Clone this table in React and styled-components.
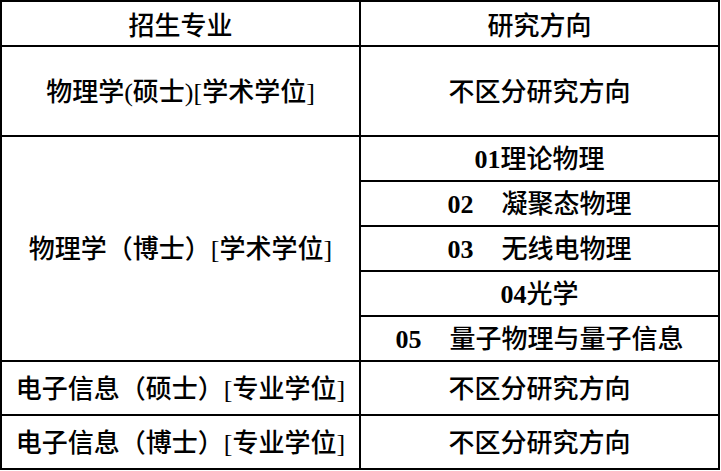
import * as React from "react";
import styled, { createGlobalStyle } from "styled-components";

const GlobalStyle = createGlobalStyle`
  html, body {
    margin: 0;
    padding: 0;
    background: #fff;
  }
  body {
    font-family: "Liberation Serif", "Noto Sans CJK SC", serif;
  }
`;

const programs = [
  { name: "物理学(硕士)[学术学位]", size: "tall", directions: [{ name: "不区分研究方向" }] },
  {
    name: "物理学（博士）[学术学位]",
    size: "normal",
    directions: [
      { code: "01", name: "理论物理" },
      { code: "02", name: "凝聚态物理", spaced: true },
      { code: "03", name: "无线电物理", spaced: true },
      { code: "04", name: "光学" },
      { code: "05", name: "量子物理与量子信息", spaced: true },
    ],
  },
  { name: "电子信息（硕士）[专业学位]", size: "wide", directions: [{ name: "不区分研究方向" }] },
  { name: "电子信息（博士）[专业学位]", size: "wide", directions: [{ name: "不区分研究方向" }] },
];

export default function App() {
  return (
    <>
      <GlobalStyle />
      <Table>
        <thead>
          <Row $size="normal">
            <Head>招生专业</Head>
            <Head>研究方向</Head>
          </Row>
        </thead>
        <tbody>
          {programs.map((p) =>
            p.directions.map((d, i) => (
              <Row key={p.name + i} $size={p.size}>
                {i === 0 && <Cell rowSpan={p.directions.length}>{p.name}</Cell>}
                <Cell>
                  {d.code && <Code $spaced={d.spaced}>{d.code}</Code>}
                  {d.name}
                </Cell>
              </Row>
            ))
          )}
        </tbody>
      </Table>
    </>
  );
}

const heights = { normal: "45px", tall: "90px", wide: "54px" };

const Table = styled.table`
  border-collapse: collapse;
  table-layout: fixed;
  width: 720px;
  margin-top: 0;
`;

const Row = styled.tr`
  height: ${(p) => heights[p.$size]};
`;

const Cell = styled.td`
  width: 50%;
  padding: 3px 0 0;
  border: 2px solid #000;
  text-align: center;
  vertical-align: middle;
  color: #000;
  font-size: 26px;
  font-weight: 500;
  line-height: 1;
  white-space: nowrap;
`;

const Head = styled(Cell).attrs({ as: "th" })`
  padding-top: 6px;
  font-weight: 500;
`;

const Code = styled.span`
  font-weight: 700;
  margin-right: ${(p) => (p.$spaced ? "28px" : "0")};
`;
